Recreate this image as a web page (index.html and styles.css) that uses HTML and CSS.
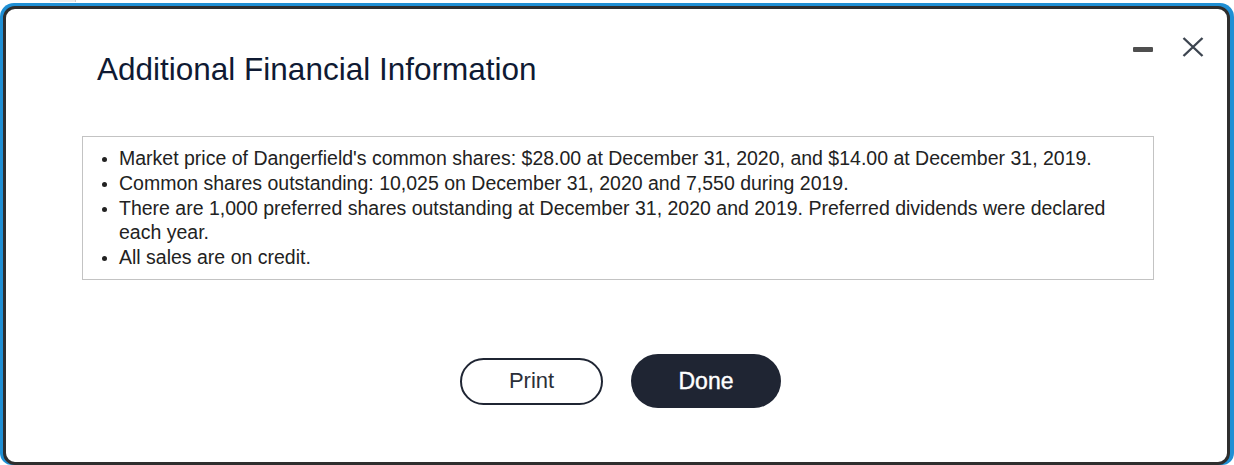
FILE: index.html
```html
<!DOCTYPE html>
<html>
<head>
<meta charset="utf-8">
<link rel="stylesheet" href="styles.css">
</head>
<body>
<div class="topstrip"><div class="tab"></div></div>
<div class="frame">
  <div class="dialog">
    <div class="header">
      <h1 class="title">Additional Financial Information</h1>
      <div class="controls">
        <span class="minimize"></span>
        <svg class="close" width="22" height="20" viewBox="0 0 22 20">
          <path d="M1.5 1 L20.5 19 M20.5 1 L1.5 19" stroke="#3d4550" stroke-width="2.4" fill="none"/>
        </svg>
      </div>
    </div>
    <div class="infobox">
      <ul class="items">
        <li>Market price of Dangerfield's common shares: $28.00 at December 31, 2020, and $14.00 at December 31, 2019.</li>
        <li>Common shares outstanding: 10,025 on December 31, 2020 and 7,550 during 2019.</li>
        <li>There are 1,000 preferred shares outstanding at December 31, 2020 and 2019. Preferred dividends were declared each year.</li>
        <li>All sales are on credit.</li>
      </ul>
    </div>
    <div class="actions">
      <button class="btn btn-print">Print</button>
      <button class="btn btn-done">Done</button>
    </div>
  </div>
</div>
</body>
</html>
```

FILE: styles.css
```css
html, body {
  margin: 0;
  padding: 0;
  background: #ffffff;
  font-family: "Liberation Sans", Arial, sans-serif;
}

.topstrip {
  height: 3px;
}

.tab {
  width: 25px;
  height: 2px;
  margin-left: 50px;
  background: #ececec;
  border-right: 1px solid #cfcfcf;
}

.frame {
  height: 462px;
  box-sizing: border-box;
  background: #1f8fd4;
  border-radius: 14px 14px 12px 12px;
  padding: 3px 4px 0 3px;
}

.dialog {
  height: 100%;
  box-sizing: border-box;
  background: #ffffff;
  border: 3px solid #2e2e2e;
  border-radius: 12px;
  display: flex;
  flex-direction: column;
}

.header {
  display: flex;
  justify-content: space-between;
  align-items: flex-start;
}

.title {
  margin: 42px 0 0 91px;
  font-size: 31.5px;
  font-weight: normal;
  color: #0f1a33;
  line-height: 36px;
}

.controls {
  display: flex;
  align-items: flex-start;
  gap: 29px;
  margin: 28px 23px 0 0;
}

.minimize {
  display: block;
  width: 20px;
  height: 5px;
  margin-top: 10px;
  background: #4f4f4f;
  border-radius: 1px;
}

.close {
  display: block;
}

.infobox {
  margin: 49px 73px 0 76px;
  border: 1px solid #c3c3c3;
  padding: 9px 0 10px 0;
}

.items {
  margin: 0;
  padding: 0 30px 0 36px;
  font-size: 19.5px;
  line-height: 24px;
  color: #222222;
}

.items li + li {
  margin-top: 1px;
}

.items li::marker {
  font-size: 17px;
}

.actions {
  display: flex;
  justify-content: center;
  align-items: center;
  gap: 28px;
  margin-top: 74px;
  padding-left: 8px;
}

.btn {
  font-family: "Liberation Sans", Arial, sans-serif;
  font-size: 22px;
  border-radius: 30px;
  cursor: pointer;
  box-sizing: border-box;
}

.btn-print {
  width: 143px;
  height: 47px;
  background: #ffffff;
  border: 2.5px solid #1f2533;
  color: #2b2f38;
}

.btn-done {
  width: 150px;
  height: 54px;
  background: #1f2533;
  border: none;
  color: #ffffff;
  font-size: 23px;
  font-weight: normal;
  -webkit-text-stroke: 0.4px #ffffff;
}
```
